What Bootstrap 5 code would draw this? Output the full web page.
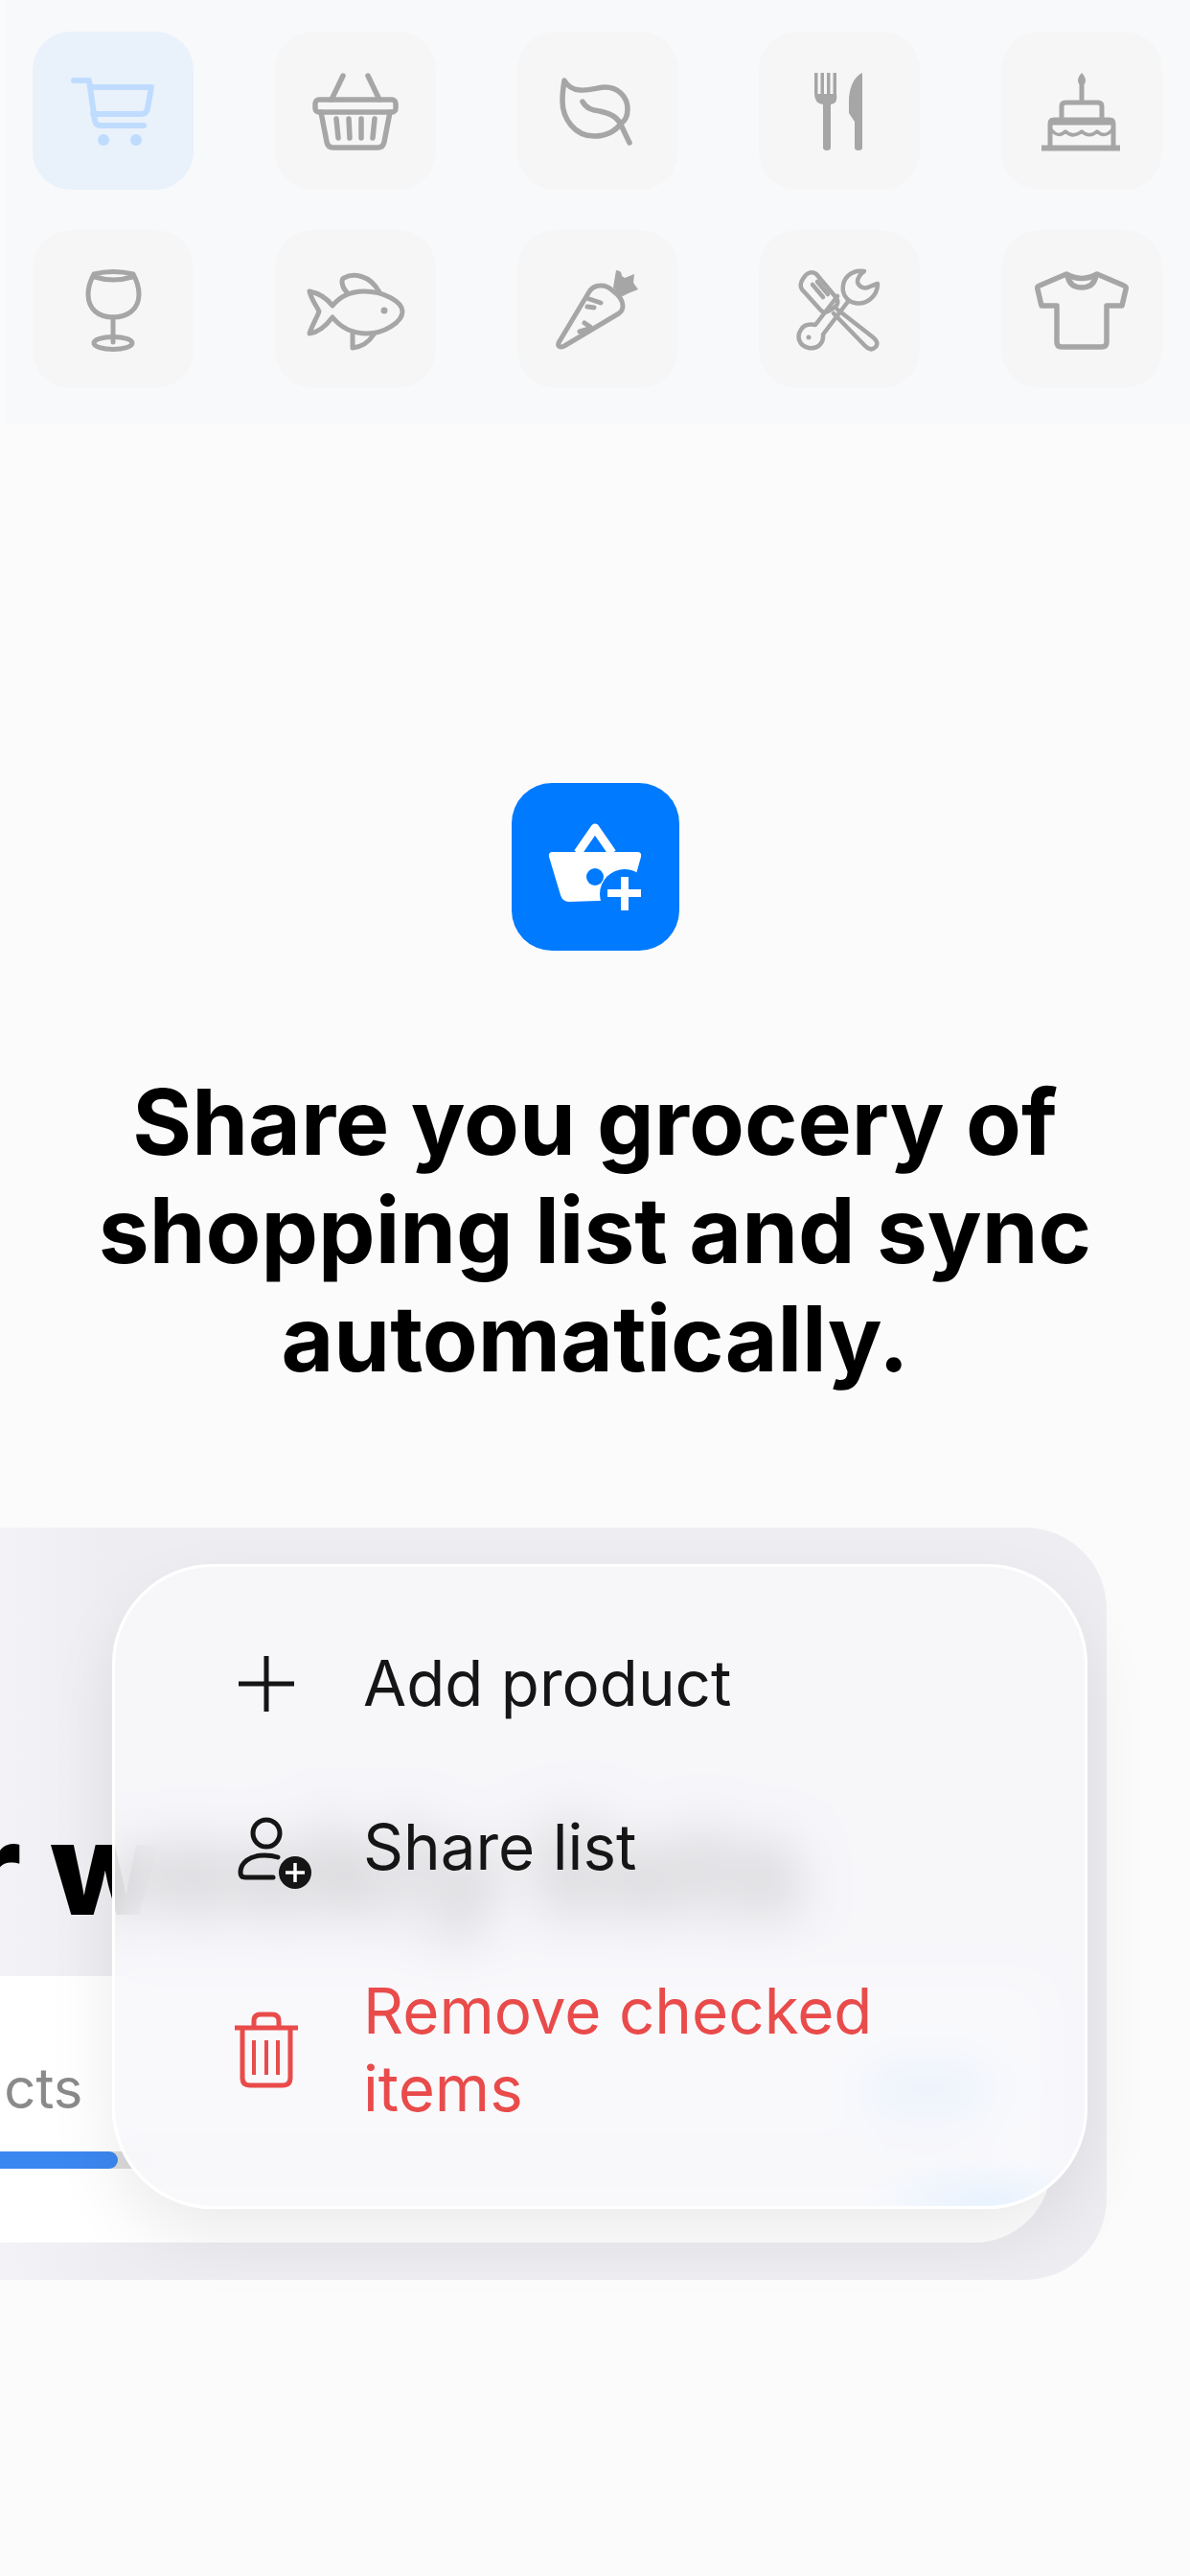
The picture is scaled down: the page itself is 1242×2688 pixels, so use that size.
<!DOCTYPE html>
<html lang="en">
<head>
<meta charset="UTF-8" />
<meta name="viewport" content="width=device-width, initial-scale=1.0" />
<title>Share your list</title>
<link rel="stylesheet" href="https://cdn.jsdelivr.net/npm/bootstrap@5.3.0/dist/css/bootstrap.min.css" />
<style>
  body { background: #fbfbfb; font-family: Inter, "Liberation Sans", sans-serif; width: 1242px; height: 2688px; overflow: hidden; }
  .tile-panel { margin-left: 6px; height: 442px; padding: 33px 29px 0 28px; background: #f8f9fb; display: grid; grid-template-columns: repeat(5, 168px); justify-content: space-between; grid-auto-rows: 165px; row-gap: 42px; }
  .tile { background: #f6f6f6; border-radius: 40px; color: #a6a6a6; }
  .tile-on { background: #e9f1fb; color: #bfdcff; }
  .tile svg { width: 100px; height: 100px; overflow: visible; filter: blur(.5px); }
  .app-icon { width: 175px; height: 175px; margin-top: 375px; background: #007aff; border-radius: 42px; }
  .headline { margin: 122px 0 141px; font-size: 94.500px; line-height: 113px; font-weight: 700; color: #000; }
  .mock-panel { width: 1155px; height: 785px; background: linear-gradient(90deg, #f3f3f7 0, #eeeef2 120px); border-radius: 0 85px 85px 0; padding: 275px 58px 39px 0; }
  .mock-title { margin: 0 0 33px -286px; font-size: 134px; line-height: 160px; font-weight: 800; color: #000; white-space: nowrap; }
  .mock-card { height: 278px; margin-left: -240px; padding: 82px 60px 0 8px; background: #fff; border-radius: 0 0 80px 0; }
  .mock-count { font-size: 58px; line-height: 70px; color: #8a8a8a; white-space: nowrap; }
  .mock-pill { width: 137px; height: 53px; border-radius: 27px; background: #a8d2ff; }
  .mock-progress { height: 18px; margin-top: 31px; background: #dcdcdc; border-radius: 9px; }
  .mock-progress .progress-bar { background: #3b87f0; border-radius: 9px; }
  .pop-menu { top: 38px; left: 117px; width: 1018px; height: 673px; padding: 81px 60px 0 118px; gap: 90px; border: 3px solid #fff; border-radius: 105px; background: radial-gradient(ellipse 130px 45px at 90% 99%, rgba(225,240,255,.7), transparent), rgba(248,248,252,.84); -webkit-backdrop-filter: blur(26px); backdrop-filter: blur(26px); box-shadow: 0 30px 70px rgba(0,0,0,.08); }
  .pop-row { gap: 61px; font-size: 65.500px; line-height: 81px; color: #151515; }
  .pop-row svg { width: 80px; height: 80px; flex: none; overflow: visible; }
  .pop-danger { color: #e94b4b; }
</style>
</head>
<body>
  <div class="tile-panel">
    <div class="tile tile-on d-flex align-items-center justify-content-center">
      <svg viewBox="0 0 100 100" fill="none" stroke="currentColor" stroke-width="6" stroke-linejoin="round" stroke-linecap="round"><path d="M9 18H25L31 60Q32 65 37 65H82"/><path d="M26 25H90L86 47Q85 53 79 53H29"/><circle cx="40" cy="80" r="6" fill="currentColor" stroke="none"/><circle cx="74" cy="80" r="6" fill="currentColor" stroke="none"/></svg>
    </div>
    <div class="tile d-flex align-items-center justify-content-center">
      <svg viewBox="0 0 100 100" fill="none" stroke="currentColor" stroke-width="5.500" stroke-linejoin="round" stroke-linecap="round"><path d="M37 13L25 38M63 13L75 38"/><rect x="8" y="38" width="84" height="13" rx="4"/><path d="M14 51L20 82Q21 88 27 88H73Q79 88 80 82L86 51"/><path d="M30 58L32 78M43 58L44 78M56 58V78M70 58L68 78"/></svg>
    </div>
    <div class="tile d-flex align-items-center justify-content-center">
      <svg viewBox="0 0 100 100" fill="none" stroke="currentColor" stroke-width="5.500" stroke-linejoin="round" stroke-linecap="round"><path d="M15 18Q20 27 31 28C42 29 50 25 58 25C70 25 81 34 81 48C81 56 77 61 74 63C68 71 58 76 46 76C26 76 13 58 13 39C13 30 14 24 15 18Z"/><path d="M34 40C38 48 46 49 52 50C60 52 68 54 73 62L83 83" /></svg>
    </div>
    <div class="tile d-flex align-items-center justify-content-center">
      <svg viewBox="0 0 100 100" fill="currentColor"><path d="M24 10h3.500v22h3V10h3.500v22h3V10h3.500v22h3V10h3.500V32Q49 42 41 43V88Q41 91 37 91Q33 91 33 88V43Q24 42 24 32Z"/><path d="M74 10V88Q74 91 70 91Q66 91 66 88V61L60 52V40C60 26 65 14 74 10Z"/></svg>
    </div>
    <div class="tile d-flex align-items-center justify-content-center">
      <svg viewBox="0 0 100 100" fill="none" stroke="currentColor" stroke-width="5" stroke-linejoin="round"><path d="M50 22V40"/><path d="M50 10C53 13 54 16 54 18C54 21 52 23 50 23C48 23 46 21 46 18C46 16 47 13 50 10Z" fill="currentColor" stroke="none"/><path d="M29 58V45Q29 41 33 41H67Q71 41 71 45V58"/><path d="M17 88V63Q17 59 21 59H79Q83 59 83 63V88"/><path d="M17 61H83" stroke-width="7"/><path d="M17 68C23 76 28 76 33 71C38 76 44 76 50 71C55 76 61 76 66 71C71 76 77 76 83 68" stroke-width="3.500"/><path d="M8 88.500H90" stroke-width="6"/></svg>
    </div>
    <div class="tile d-flex align-items-center justify-content-center">
      <svg viewBox="0 0 100 100" fill="none" stroke="currentColor" stroke-width="5" stroke-linejoin="round" stroke-linecap="round"><path d="M30 13Q24 24 24 34C24 50 35 58 50 58C65 58 77 50 77 34Q77 24 71 13Q50 8 30 13Z"/><path d="M31 16Q50 22 70 16"/><path d="M50 58V84"/><ellipse cx="50" cy="85" rx="20" ry="6.500"/></svg>
    </div>
    <div class="tile d-flex align-items-center justify-content-center">
      <svg viewBox="0 0 100 100" fill="none" stroke="currentColor" stroke-width="5" stroke-linejoin="round" stroke-linecap="round"><path d="M26 46C34 36 46 31 59 31C80 31 99 42 99 52C99 63 80 75 62 75C46 75 34 68 26 58C20 66 12 74 2 75C5 66 10 58 12 52C9 45 4 40 2 31C12 33 20 38 26 46Z"/><path d="M41 32C35 26 35 18 38 17C47 12 65 13 75 32"/><path d="M47 76V90C56 89 64 84 69 76"/><circle cx="80" cy="51" r="3.500" fill="currentColor" stroke="none"/></svg>
    </div>
    <div class="tile d-flex align-items-center justify-content-center">
      <svg viewBox="0 0 100 100" fill="none" stroke="currentColor" stroke-width="5" stroke-linejoin="round" stroke-linecap="round"><path d="M10 83L40 33Q44 25 53 25Q60 25 65 30Q76 38 76 46Q76 51 72 54L15 88Q11 90 9 88Q8 86 10 83Z"/><path d="M38 38L53 43M39 47L46 48M36 64L42 68M31 73L41 70"/><path d="M69 9Q75 9 75 15L78 17L88 13L87 22L92 29L82 33L74 37L66 27Z" fill="currentColor" stroke="none"/></svg>
    </div>
    <div class="tile d-flex align-items-center justify-content-center">
      <svg viewBox="0 0 100 100" fill="none" stroke="currentColor" stroke-width="4.500" stroke-linejoin="round" stroke-linecap="round"><path d="M12 18Q18 8 26 13L47 38Q50 43 46 47L38 52Q33 54 30 50L11 29Q8 24 12 18Z"/><path d="M22 24L33 37M27 21L38 34"/><path d="M48 50L84 78Q92 84 88 89Q83 94 77 88L44 54"/><path d="M90 23C90 36 78 46 66 43C60 42 55 37 54 31C52 18 62 8 76 10C72 13 69 17 69 21C70 27 77 29 82 26Q87 24 90 23Z"/><path d="M58 43L33 76C34 84 28 92 18 90C8 88 5 78 10 71C13 66 19 65 25 66L48 36"/><circle cx="18" cy="79" r="2.500" fill="currentColor" stroke="none"/></svg>
    </div>
    <div class="tile d-flex align-items-center justify-content-center">
      <svg viewBox="0 0 100 100" fill="none" stroke="currentColor" stroke-width="5.500" stroke-linejoin="round" stroke-linecap="round"><path d="M34 13L6 25Q3 26 4 29L8 46H24V84Q24 89 29 89H71Q76 89 76 84V46H92L96 29Q97 26 94 25L66 13Q50 22 34 13Z"/><path d="M35 14Q37 27 50 27Q63 27 65 14"/></svg>
    </div>
  </div>

  <div class="d-flex justify-content-center">
    <div class="app-icon">
      <svg viewBox="0 0 175 175" width="175" height="175" fill="#fff">
        <path d="M69 73L87 47L105 73" fill="none" stroke="#fff" stroke-width="9" stroke-linejoin="round"/>
        <path d="M43 72H131Q136 72 135 77L130 95L118 122L60 124Q53 124 51 117L39 77Q38 72 43 72Z"/>
        <circle cx="87" cy="98" r="9" fill="#007aff"/>
        <circle cx="118" cy="116" r="26" fill="#007aff"/>
        <path d="M114 98H122V111H135V119H122V133H114V119H100V111H114Z"/>
      </svg>
    </div>
  </div>

  <h1 class="headline text-center px-5">Share you grocery of shopping list and sync automatically.</h1>

  <div class="mock-panel position-relative">
    <div class="mock-title">Your weekly lists</div>
    <div class="mock-card">
      <div class="d-flex justify-content-between align-items-center">
        <div class="mock-count">12 products</div>
        <div class="mock-pill"></div>
      </div>
      <div class="progress mock-progress">
        <div class="progress-bar" style="width: 28%"></div>
      </div>
    </div>
    <div class="pop-menu position-absolute d-flex flex-column">
      <div class="pop-row d-flex align-items-center">
        <svg viewBox="0 0 80 80" fill="none" stroke="#151515" stroke-width="5"><path d="M40 11V69M11 40H69"/></svg>
        <span>Add product</span>
      </div>
      <div class="pop-row d-flex align-items-center">
        <svg viewBox="0 0 80 80" fill="none" stroke="#151515" stroke-width="5" stroke-linecap="round"><circle cx="40" cy="25" r="14"/><path d="M52 50Q46 48 38 48C22 48 13 56 13 66Q13 71 18 71H47"/><circle cx="70" cy="66" r="17" fill="#151515" stroke="none"/><path d="M70 56V76M60 66H80" stroke="#fff" stroke-width="3.500" stroke-linecap="butt"/></svg>
        <span>Share list</span>
      </div>
      <div class="pop-row pop-danger d-flex align-items-center">
        <svg viewBox="0 0 80 80" fill="none" stroke="#e94b4b" stroke-width="5" stroke-linecap="butt"><path d="M7 17H73"/><path d="M27 16V10Q27 3 34 3H46Q53 3 53 10V16"/><path d="M15 17V69Q15 77 23 77H57Q65 77 65 69V17"/><path d="M27 30V66M40 30V66M52 30V66" stroke-width="4"/></svg>
        <span>Remove checked<br />items</span>
      </div>
    </div>
  </div>
  <script src="https://cdn.jsdelivr.net/npm/bootstrap@5.3.0/dist/js/bootstrap.bundle.min.js"></script>
</body>
</html>
